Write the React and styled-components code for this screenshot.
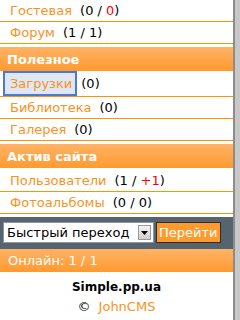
import { createGlobalStyle, styled } from "styled-components";

const GlobalStyle = createGlobalStyle`
  html, body {
    margin: 0;
    padding: 0;
    background: #fff;
  }
  body {
    font-family: "DejaVu Sans", Verdana, sans-serif;
    font-size: 13px;
    color: #000;
  }
`;

const orange = "#f7931e";
const line = "#ff9400";

function App() {
  return (
    <>
      <GlobalStyle />
      <Page>
        <Content>
          <Row>
            <Link>Гостевая</Link> <Count>(0 / <Red>0</Red>)</Count>
          </Row>
          <Row>
            <Link>Форум</Link> <Count>(1 / 1)</Count>
          </Row>

          <Header>Полезное</Header>
          <Row $focus>
            <FocusLink>Загрузки</FocusLink> <Count>(0)</Count>
          </Row>
          <Row>
            <Link>Библиотека</Link> <Count>(0)</Count>
          </Row>
          <Row>
            <Link>Галерея</Link> <Count>(0)</Count>
          </Row>

          <Header>Актив сайта</Header>
          <Row>
            <Link>Пользователи</Link> <Count>(1 / <Red>+1</Red>)</Count>
          </Row>
          <Row>
            <Link>Фотоальбомы</Link> <Count>(0 / 0)</Count>
          </Row>

          <Toolbar>
            <SelectBox>
              <SelectText>Быстрый переход</SelectText>
              <SelectArrow>
                <svg width="7" height="4" viewBox="0 0 7 4">
                  <path d="M0 0h7L3.5 4z" fill="#000" />
                </svg>
              </SelectArrow>
            </SelectBox>
            <GoButton>Перейти</GoButton>
          </Toolbar>

          <Online>Онлайн: 1 / 1</Online>

          <Footer>
            <Site>Simple.pp.ua</Site>
            <Copy>
              <span>©</span>
              <Link>JohnCMS</Link>
            </Copy>
          </Footer>
        </Content>
        <Scrollbar />
      </Page>
    </>
  );
}

const Page = styled.div`
  display: flex;
  width: 240px;
  height: 320px;
  overflow: hidden;
`;

const Content = styled.div`
  width: 233px;
  display: flex;
  flex-direction: column;
`;

const Scrollbar = styled.div`
  width: 5px;
  border-left: 2px solid #8c8c8c;
  background: #c8c8c8;
`;

const Row = styled.div`
  height: ${(p) => (p.$focus ? "25px" : "21px")};
  margin-top: ${(p) => (p.$focus ? "-2px" : "0")};
  box-sizing: content-box;
  padding: 0 10px;
  display: flex;
  align-items: center;
  gap: 8px;
  line-height: 15px;
  border-bottom: 1px solid ${line};
  white-space: nowrap;
`;

const Link = styled.span`
  color: ${orange};
`;

const FocusLink = styled.span`
  color: ${orange};
  margin-left: -7px;
  margin-right: -4px;
  padding: 3px 3px 3px 5px;
  line-height: 15px;
  background: #dfe7f4;
  border: 2px solid #4a7ad0;
`;

const Count = styled.span`
  color: #000;
`;

const Red = styled.span`
  color: #ff0000;
`;

const Header = styled.div`
  margin: 3px 0 2px;
  height: 24px;
  padding: 0 7px;
  display: flex;
  align-items: center;
  color: #fff;
  font-weight: bold;
  font-size: 13px;
  background: linear-gradient(#ffb366, #ff9a30);
`;

const Toolbar = styled.div`
  margin-top: 3px;
  background: #56646f;
  padding: 5px 3px 6px;
  display: flex;
  align-items: center;
  gap: 2px;
`;

const SelectBox = styled.div`
  width: 149px;
  height: 19px;
  background: #fff;
  border: 1px solid #8a96a0;
  display: flex;
  align-items: center;
`;

const SelectText = styled.span`
  flex: 1;
  padding-left: 3px;
  font-size: 13px;
  white-space: nowrap;
`;

const SelectArrow = styled.span`
  width: 13px;
  height: 15px;
  margin-right: 2px;
  display: flex;
  align-items: center;
  justify-content: center;
  background: linear-gradient(#f2f2f2, #cfcfcf);
  border: 1px solid #9a9a9a;
  box-sizing: border-box;
`;

const GoButton = styled.button`
  height: 21px;
  padding: 0 2px;
  background: #ff9a2e;
  border: 1px solid #2e2e2e;
  color: #fff;
  font-family: "DejaVu Sans", Verdana, sans-serif;
  font-size: 13px;
  line-height: 17px;
`;

const Online = styled.div`
  height: 23px;
  padding: 0 8px;
  display: flex;
  align-items: center;
  color: #fff;
  font-size: 13px;
  background: linear-gradient(#ffb366, #ff9a30);
`;

const Footer = styled.div`
  padding-top: 8px;
  display: flex;
  flex-direction: column;
  align-items: center;
  gap: 5px;
`;

const Site = styled.div`
  font-weight: bold;
  font-size: 12px;
  line-height: 14px;
`;

const Copy = styled.div`
  display: flex;
  gap: 8px;
  line-height: 15px;
`;

export default App;
